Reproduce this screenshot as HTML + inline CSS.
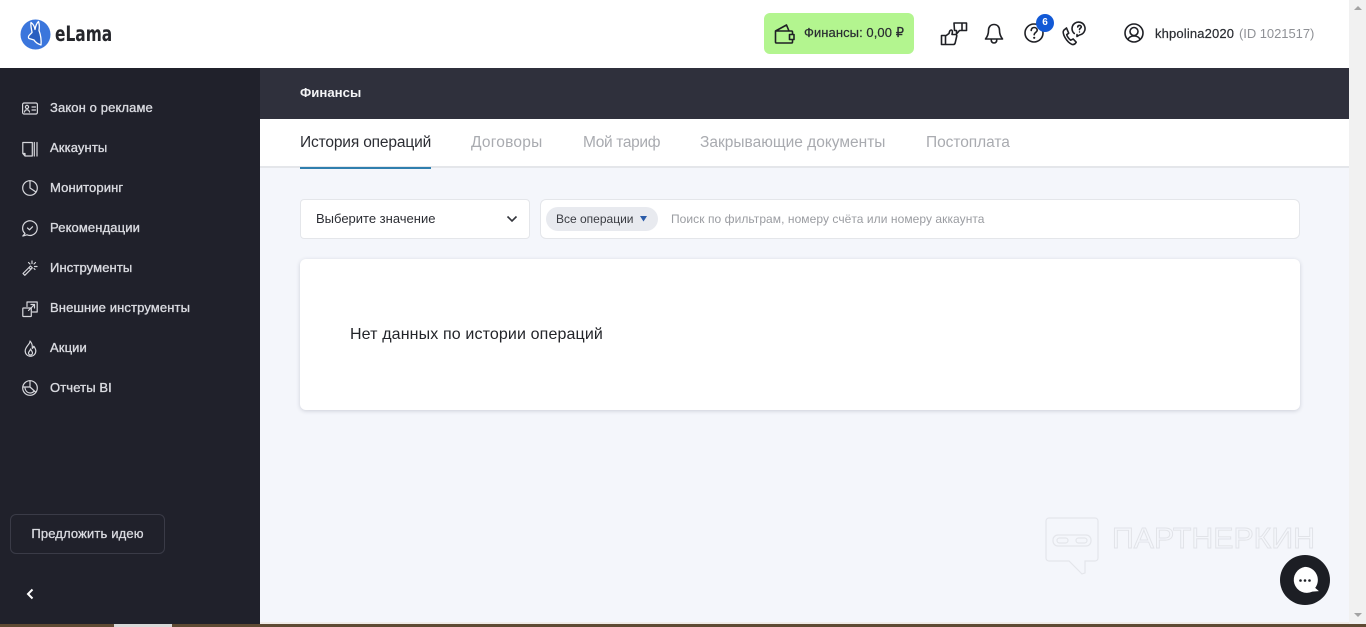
<!DOCTYPE html>
<html lang="ru"><head><meta charset="utf-8"><title>Финансы</title>
<style>
*{box-sizing:border-box}
html,body{margin:0;padding:0;width:1366px;height:627px;overflow:hidden;background:#f4f6fb;font-family:"Liberation Sans","DejaVu Sans",sans-serif}
.a{position:absolute;white-space:nowrap}
svg{position:absolute;overflow:visible}
.m{position:absolute;left:50px;color:#d9dae0;font-size:13px;line-height:16px;white-space:nowrap;letter-spacing:.12px;-webkit-text-stroke:.35px #d9dae0}
.ic{fill:none;stroke:#d6d7dc;stroke-width:1.2;stroke-linecap:round;stroke-linejoin:round}
.k{fill:none;stroke:#1f2025;stroke-width:1.6;stroke-linecap:round;stroke-linejoin:round}
.t{position:absolute;top:134px;font-size:15.5px;line-height:18px;color:#a9abb0;white-space:nowrap}
</style></head><body>
<div class="a" style="left:0;top:0;width:1349px;height:68px;background:#fff"></div>
<div class="a" style="left:0;top:68px;width:260px;height:556px;background:#20212b"></div>
<div class="a" style="left:260px;top:68px;width:1089px;height:51px;background:#2f303c"></div>
<div class="a" style="left:260px;top:119px;width:1089px;height:49px;background:#fff;border-bottom:2px solid #e4e6ea"></div>
<div class="a" style="left:1349px;top:0;width:17px;height:627px;background:#f1f1f1"></div>
<div class="a" style="left:0;top:624px;width:1366px;height:3px;background:#5e4a33"></div>
<div class="a" style="left:114px;top:624px;width:58px;height:3px;background:#d8d8d8"></div>
<div class="a" style="left:260px;top:622px;width:1089px;height:2px;background:#f0ece8"></div>

<svg style="left:1354px;top:5px" width="8" height="6"><path d="M4 1L8 5H0z" fill="#a3a3a3"/></svg>
<svg style="left:1354px;top:612px" width="8" height="6"><path d="M0 1H8L4 5z" fill="#a3a3a3"/></svg>

<!-- logo -->
<svg style="left:20px;top:19px" width="31" height="31" viewBox="0 0 31 31">
<circle cx="15.5" cy="15.5" r="15" fill="#3b76dc"/>
<path d="M12 13c-.5-3-1.500-6-1-9.500 2 1.500 3.500 4 4 7 .5-3 1.500-6 3.500-8 1 3 1 6 .5 9 1.500 4 2.500 9 2 14.500-3-1-5.500-2.500-7-5-1.500-.5-3-1-5-1.500-1-1-.5-2.500.5-3.500 1-1 2-2 2.500-2.500z" fill="#2a5fc0" stroke="#fff" stroke-width="1.300" stroke-linejoin="round"/>
</svg>
<div class="a" style="left:55px;top:20px;font:700 21px/28px 'DejaVu Sans',sans-serif;color:#25262b;transform:scaleX(.735);transform-origin:left">eLama</div>

<!-- finance -->
<div class="a" style="left:764px;top:13px;width:150px;height:41px;border-radius:6px;background:#b3f58f"></div>
<svg style="left:774px;top:23px" width="22" height="22" viewBox="0 0 22 22"><path class="k" d="M1.500 8L12.500 2l2.500 6M2.500 8H17.500a1 1 0 0 1 1 1v2.500M18.500 16.500V19a1 1 0 0 1-1 1H2.500a1 1 0 0 1-1-1V8M15.500 11.500h4.500v5h-4.500z" stroke-width="1.500"/></svg>
<div class="a" style="left:804px;top:25px;font-size:13px;line-height:16px;color:#2a2d32;letter-spacing:.07px;-webkit-text-stroke:.2px #2a2d32">Финансы: 0,00 ₽</div>

<!-- top icons -->
<svg style="left:940px;top:21px" width="28" height="26" viewBox="0 0 28 26">
<path class="k" d="M1.500 14.500h4v9h-4zM5.500 15l3.500-2.500c.5-2 .8-3.500 2.300-3.500 1.500.3 1.200 2.500.7 4.500h3.500c1 0 1.500.8 1.200 1.800l-1.500 6.500c-.2 1-1 1.700-2 1.700H5.500" stroke-width="1.500"/>
<path class="k" d="M14 2h8v7.500h-2.500L16.500 13v-3.500H14.500zM22 2h4.500v7.500H22" stroke-width="1.500"/>
</svg>
<svg style="left:984px;top:23px" width="20" height="22" viewBox="0 0 20 22"><path class="k" stroke-width="1.800" d="M10 1.500c-3.500 0-5.500 2.500-5.500 6 0 4-1 6-3 8.500h17c-2-2.500-3-4.500-3-8.500 0-3.500-2-6-5.500-6zM7.200 16.500c0 2.300 1.100 3.500 2.800 3.500s2.800-1.200 2.800-3.500"/></svg>
<svg style="left:1024px;top:23px" width="20" height="20" viewBox="0 0 20 20"><circle class="k" cx="10" cy="10" r="9"/><path class="k" d="M7.200 7.500c.2-2 1.500-3 3-3 1.700 0 3 1.200 3 2.700 0 2-3 2.300-3 4.500"/><circle cx="10.200" cy="14.800" r="1.100" fill="#1f2025"/></svg>
<div class="a" style="left:1036px;top:14px;width:18px;height:18px;border-radius:50%;background:#1259d6;color:#fff;font:700 10px/18px 'Liberation Sans',sans-serif;text-align:center">6</div>
<svg style="left:1062px;top:22px" width="26" height="25" viewBox="0 0 26 25">
<path class="k" stroke-width="1.500" d="M4.500 6L1.800 8.200c-1 1.500-.7 4 1.200 7.300s4.800 6 7.200 7c1.500.2 3-.5 4-2.300l-3-3.200-2.500 1.200c-1.500-1-3.500-3.500-4-5.500l2-1.500z"/>
<path class="k" d="M12.300 11.500a6.500 6.500 0 1 1 5.200 1.500l-2.500 1.500v-2" stroke-width="1.200"/>
<path class="k" d="M15.700 5c.1-1 .9-1.600 1.800-1.600 1 0 1.800.6 1.800 1.500 0 1.200-1.800 1.300-1.800 2.700" stroke-width="1.200"/><circle cx="17.500" cy="10" r=".7" fill="#1f2025"/>
</svg>
<svg style="left:1124px;top:23px" width="20" height="20" viewBox="0 0 20 20"><circle class="k" cx="10" cy="10" r="9" stroke-width="1.800"/><circle class="k" cx="10" cy="8.500" r="4" stroke-width="1.800"/><path class="k" d="M4 16.500c1-2.500 3.500-3.500 6-3.500s5 1 6 3.500" stroke-width="1.800"/></svg>
<div class="a" style="left:1155px;top:26px;font-size:13px;line-height:16px;color:#2a2d32;letter-spacing:.15px;-webkit-text-stroke:.2px #2a2d32">khpolina2020</div>
<div class="a" style="left:1239px;top:26px;font-size:13px;line-height:16px;color:#8f9196;letter-spacing:-.05px">(ID 1021517)</div>

<!-- header -->
<div class="a" style="left:300px;top:84px;font-size:13.2px;font-weight:700;line-height:17px;color:#f4f4f6">Финансы</div>
<div class="t" style="left:300px;color:#2b2d33;letter-spacing:-.15px">История операций</div>
<div class="t" style="left:471px;letter-spacing:.22px">Договоры</div>
<div class="t" style="left:583px;letter-spacing:-.35px">Мой тариф</div>
<div class="t" style="left:700px">Закрывающие документы</div>
<div class="t" style="left:926px;letter-spacing:-.05px">Постоплата</div>
<div class="a" style="left:300px;top:167px;width:131px;height:2px;background:#2f7fae"></div>

<!-- sidebar -->
<div class="m" style="top:100px">Закон о рекламе</div>
<div class="m" style="top:140px">Аккаунты</div>
<div class="m" style="top:180px">Мониторинг</div>
<div class="m" style="top:220px">Рекомендации</div>
<div class="m" style="top:260px">Инструменты</div>
<div class="m" style="top:300px">Внешние инструменты</div>
<div class="m" style="top:340px">Акции</div>
<div class="m" style="top:380px">Отчеты BI</div>

<svg class="ic" style="left:22px;top:102px" width="16" height="13" viewBox="0 0 16 13"><rect x=".6" y="1" width="14.800" height="11" rx="1.500"/><circle cx="5" cy="5" r="1.600"/><path d="M2.500 10c.3-1.500 1.300-2.200 2.500-2.200s2.200.7 2.500 2.200M10 5h3.500M10 8h3.500"/></svg>
<svg class="ic" style="left:22px;top:141px" width="16" height="16" viewBox="0 0 16 16"><path d="M.8 1.500h9.500V15H3L.8 12.500zM.8 12.500H3V15"/><path d="M12.300 1.500V15M15 1.500V15"/></svg>
<svg class="ic" style="left:22px;top:180px" width="16" height="16" viewBox="0 0 16 16"><circle cx="8" cy="8" r="7.300"/><path d="M8 .7V8l6 4"/></svg>
<svg class="ic" style="left:22px;top:220px" width="16" height="17" viewBox="0 0 16 17"><path d="M3 13.500A7.300 7.300 0 1 1 5 14.800L.8 16z"/><path d="M5.500 8l2 1.800 3-3"/></svg>
<svg class="ic" style="left:22px;top:260px" width="16" height="16" viewBox="0 0 16 16"><path d="M1 13.500L8.500 6l1.800 1.800L2.800 15.300zM7 7.500l1.800 1.800"/><path d="M10 1v2.500M13.500 2.500l-1.500 1.500M15 6.500h-2.500M6.500 2.500L8 4M13 9.500l-1-1"/></svg>
<svg class="ic" style="left:22px;top:301px" width="16" height="16" viewBox="0 0 16 16"><path d="M5 5.500V1h10.200v10H10.500"/><rect x=".8" y="7" width="8.500" height="8.500" rx=".5"/><path d="M6.500 9.500l6-6M9 3.500H12.500V7"/></svg>
<svg class="ic" style="left:24px;top:340px" width="13" height="17" viewBox="0 0 13 17"><path d="M6 1c.5 3-4.800 5.500-4.800 10a5.300 5.300 0 0 0 10.600 0c0-2-1-3.500-2-4.800-.3 1.200-.8 1.800-1.500 2.200C8.500 6 8 3 6 1z"/><path d="M6.500 9c0 1.500-2 2.500-2 4a2 2 0 0 0 4 0c0-1.500-1.500-2.500-2-4z"/></svg>
<svg class="ic" style="left:22px;top:380px" width="16" height="16" viewBox="0 0 16 16"><circle cx="8" cy="8" r="7.300"/><path d="M8 .7V7H1M8 7l5.500 5M3 8c.3 3 2.500 5 5 5 1.500 0 3-.5 4-1.800"/></svg>

<div class="a" style="left:10px;top:514px;width:155px;height:40px;border:1px solid #3a3b47;border-radius:6px;color:#d9dae0;font-size:13px;letter-spacing:.15px;-webkit-text-stroke:.3px #d9dae0;line-height:38px;text-align:center">Предложить идею</div>
<svg style="left:26px;top:588px" width="8" height="12" viewBox="0 0 8 12"><path d="M6.500 1.500L2 6l4.500 4.500" fill="none" stroke="#fff" stroke-width="2"/></svg>

<!-- filters -->
<div class="a" style="left:300px;top:199px;width:230px;height:40px;background:#fff;border:1px solid #e4e6ea;border-radius:4px"></div>
<div class="a" style="left:316px;top:211px;font-size:13px;line-height:16px;color:#2b2d33">Выберите значение</div>
<svg style="left:506px;top:215px" width="12" height="8" viewBox="0 0 12 8"><path d="M1.500 1.500L6 6l4.500-4.500" fill="none" stroke="#33353b" stroke-width="1.600"/></svg>
<div class="a" style="left:540px;top:199px;width:760px;height:40px;background:#fff;border:1px solid #e4e6ea;border-radius:6px"></div>
<div class="a" style="left:546px;top:207px;width:112px;height:24px;background:#e8eaef;border-radius:12px"></div>
<div class="a" style="left:556px;top:211px;font-size:12px;line-height:16px;color:#3a3c42">Все операции</div>
<svg style="left:640px;top:216px" width="7" height="6"><path d="M0 0H7L3.500 5.500z" fill="#2b5ba8"/></svg>
<div class="a" style="left:671px;top:211px;font-size:12px;line-height:16px;color:#9a9ca1;letter-spacing:.06px">Поиск по фильтрам, номеру счёта или номеру аккаунта</div>

<!-- card -->
<div class="a" style="left:300px;top:259px;width:1000px;height:151px;background:#fff;border-radius:6px;box-shadow:0 1px 4px rgba(30,35,60,.18)"></div>
<div class="a" style="left:350px;top:325px;font-size:16px;line-height:19px;color:#23252a;letter-spacing:.13px">Нет данных по истории операций</div>

<!-- watermark -->
<svg style="left:1045px;top:517px" width="54" height="58" viewBox="0 0 54 58" fill="none" stroke="#e4e6eb" stroke-width="1.200"><path d="M4 1h46a3 3 0 0 1 3 3v37a3 3 0 0 1-3 3H40v12l-3 1-13-13H4a3 3 0 0 1-3-3V4a3 3 0 0 1 3-3z"/><rect x="8" y="18" width="38" height="11" rx="5"/><rect x="12" y="21" width="11" height="5" rx="2.500"/><rect x="31" y="21" width="11" height="5" rx="2.500"/></svg>
<svg style="left:1110px;top:524px" width="210" height="30"><text x="2" y="24" font-family="Liberation Sans, sans-serif" font-size="28.500" fill="none" stroke="#e1e3e8" stroke-width=".9" textLength="203" lengthAdjust="spacingAndGlyphs">ПАРТНЕРКИН</text></svg>

<!-- chat -->
<div class="a" style="left:1280px;top:555px;width:50px;height:50px;border-radius:50%;background:#1c1e24"></div>
<svg style="left:1290px;top:565px" width="32" height="32" viewBox="0 0 32 32"><path d="M15 1a14 14 0 0 1 11 22.500l4 3.500-7 .5A14 14 0 1 1 15 1z" fill="#fff" transform="translate(1 1) scale(.93)"/><circle cx="10.500" cy="15.500" r="1.300" fill="#1c1e24"/><circle cx="15" cy="15.500" r="1.300" fill="#1c1e24"/><circle cx="19.500" cy="15.500" r="1.300" fill="#1c1e24"/></svg>
</body></html>
